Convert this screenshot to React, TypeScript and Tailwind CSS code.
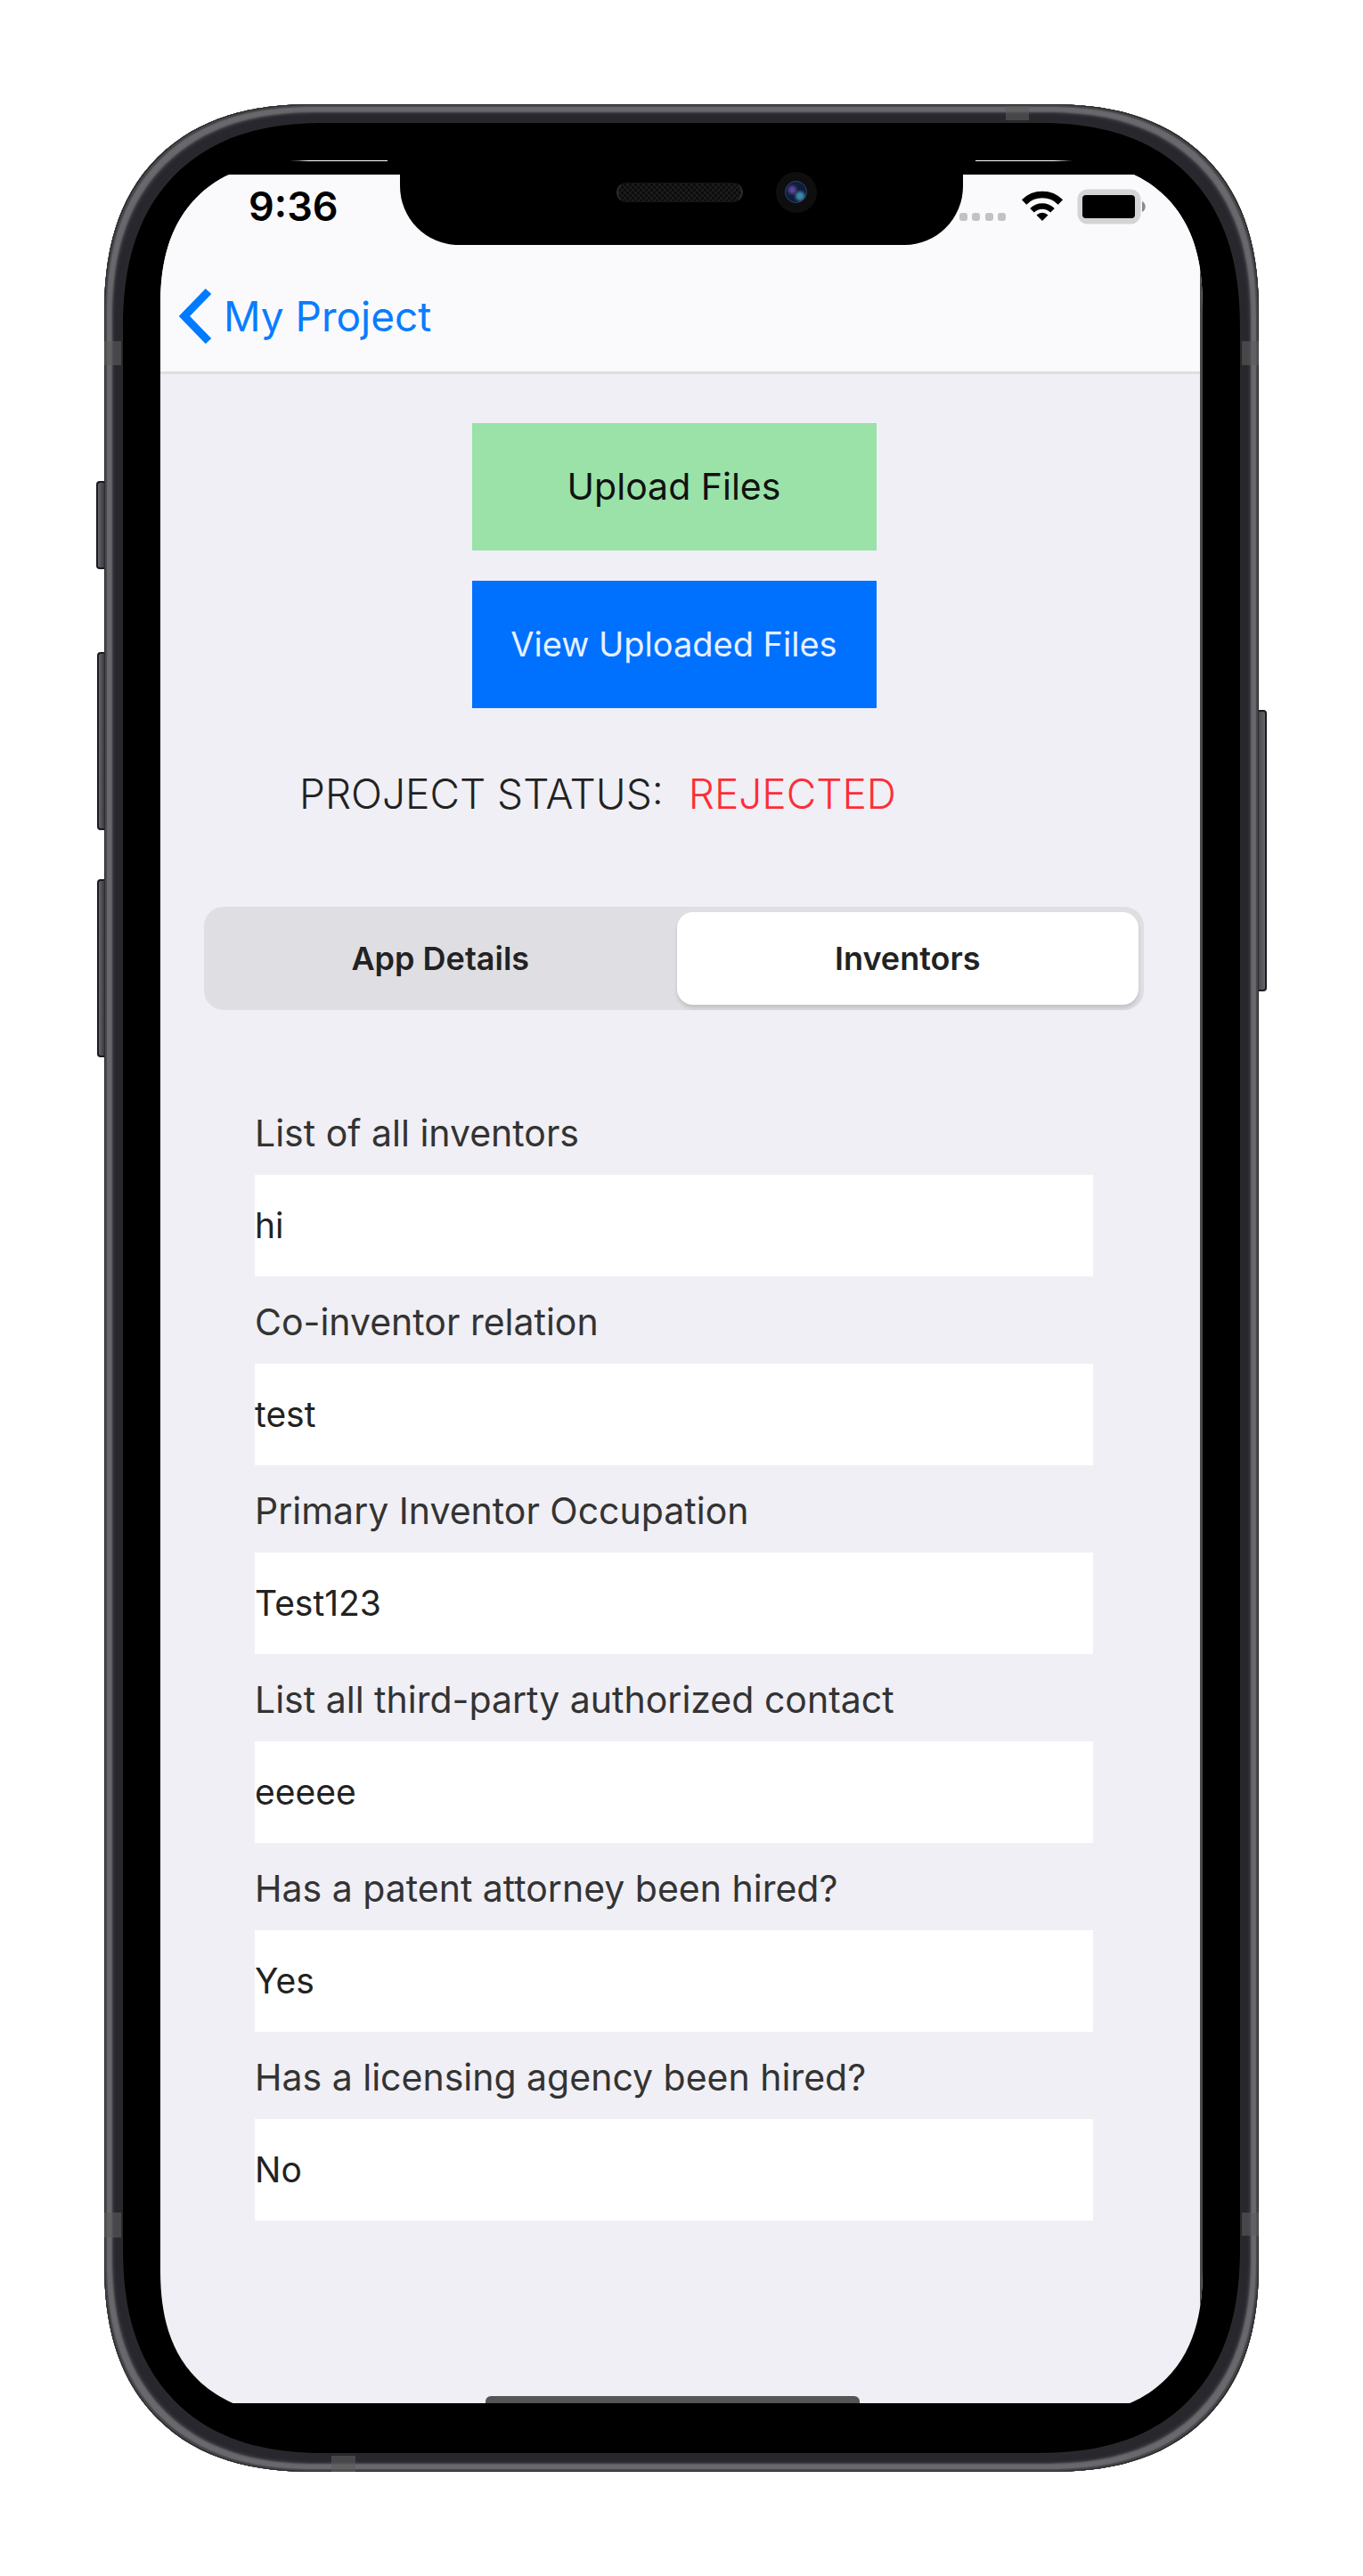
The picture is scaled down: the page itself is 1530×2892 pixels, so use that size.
import { useState } from "react";

const fields = [
  { id: "inventors", label: "List of all inventors", value: "hi" },
  { id: "relation", label: "Co-inventor relation", value: "test" },
  { id: "occupation", label: "Primary Inventor Occupation", value: "Test123" },
  { id: "contact", label: "List all third-party authorized contact", value: "eeeee" },
  { id: "attorney", label: "Has a patent attorney been hired?", value: "Yes" },
  { id: "agency", label: "Has a licensing agency been hired?", value: "No" },
];

const keyLeft =
  "absolute rounded-l-[4px] border-2 border-r-0 border-[#1b1b20] bg-linear-to-r from-[#66656b] to-[#3b3a40]";

function DeviceTrim() {
  return (
    <div aria-hidden="true">
      <div className={`${keyLeft} top-[423px] -left-[9px] h-[99px] w-[9px]`} />
      <div className={`${keyLeft} top-[615px] -left-2 h-[200px] w-2`} />
      <div className={`${keyLeft} top-[870px] -left-2 h-[200px] w-2`} />
      <div className="absolute top-[680px] -right-[9px] h-[316px] w-[9px] rounded-r-[4px] border-2 border-l-0 border-[#1b1b20] bg-linear-to-r from-[#4a4a4c] to-[#66656b]" />
      <div className="absolute top-[266px] left-0 h-[27px] w-[19px] bg-[#5c5c5c]/60" />
      <div className="absolute top-[266px] right-0 h-[27px] w-[19px] bg-[#5c5c5c]/60" />
      <div className="absolute bottom-[263px] left-0 h-[28px] w-[19px] bg-[#5c5c5c]/60" />
      <div className="absolute right-0 bottom-[265px] h-[26px] w-[19px] bg-[#5c5c5c]/60" />
      <div className="absolute top-[2px] right-[258px] h-4 w-[26px] bg-[#5c5c5c]/60" />
      <div className="absolute bottom-0 left-[255px] h-[18px] w-[27px] bg-[#5c5c5c]/60" />
    </div>
  );
}

function Notch() {
  return (
    <div className="flex h-[79px] items-start justify-center rounded-b-[66px] bg-black pt-2">
      <div className="flex h-[23px] items-center gap-[37px] pl-[78px]">
        <div className="h-[22px] w-[142px] rounded-full border border-x-2 border-[#2b2b2b] border-y-[#141414] bg-[#111] bg-[repeating-conic-gradient(#1b1b1b_0_25%,#0d0d0d_0_50%)] bg-size-[6px_6px]" />
        <div className="flex size-[46px] shrink-0 items-center justify-center rounded-full bg-[#0e0e0e]">
          <div className="size-[25px] rounded-full border border-[#2f4668] bg-[radial-gradient(circle_at_70%_70%,#3c85a5_0_12%,transparent_32%),radial-gradient(circle_at_32%_40%,#5b4596_0_10%,transparent_32%)] bg-[#0f1d3c]" />
        </div>
      </div>
    </div>
  );
}

function StatusIcons() {
  return (
    <svg width="212" height="40" viewBox="0 0 212 40" aria-label="Wi-Fi on, battery full" role="img" className="shrink-0">
      <g fill="#c2c2c4">
        <rect x="0" y="27" width="9" height="9" rx="3" />
        <rect x="14" y="27" width="9" height="9" rx="3" />
        <rect x="29" y="27" width="9" height="9" rx="3" />
        <rect x="43" y="27" width="9" height="9" rx="3" />
      </g>
      <g transform="translate(70 2)">
        <path d="M23 34 16.5 27.5a9.2 9.2 0 0 1 13 0Z" fill="#000" />
        <path d="M11.5 22.3a16.3 16.3 0 0 1 23 0" fill="none" stroke="#000" strokeWidth="6.5" />
        <path d="M2.6 13a29 29 0 0 1 40.8 0" fill="none" stroke="#000" strokeWidth="7.5" />
      </g>
      <rect x="135" y="3" width="66" height="34" rx="9" fill="#d4d4d6" stroke="#d4d4d6" strokeWidth="5" />
      <rect x="138" y="7" width="59" height="26" rx="4" fill="#000" />
      <path d="M205 14c5 2 5 10 0 12Z" fill="#8c8c8e" />
    </svg>
  );
}

export default function App() {
  const [tab, setTab] = useState("Inventors");
  return (
    <div className="bg-white px-[117px] py-[117px] font-[Inter,'Liberation_Sans',sans-serif] text-black">
      <div className="relative rounded-[208px] supports-[corner-shape:squircle]:rounded-[235px] [corner-shape:superellipse(1.24)] bg-black p-[63px] shadow-[inset_0_0_0_1px_#2c2c2e,inset_0_0_1px_3px_#47474a,inset_0_0_2px_9px_#69686d,inset_0_0_3px_11px_#38373c,inset_0_0_0_20px_#28272e,inset_0_0_0_21px_#2b2b2a]">
        <DeviceTrim />
        <div className="overflow-hidden rounded-[143px] supports-[corner-shape:squircle]:rounded-[165px] [corner-shape:superellipse(1.27)] bg-black pb-[14px]">
          <div className="flex h-4 justify-between px-[145px]" aria-hidden="true">
            <div className="h-px w-[110px] bg-linear-to-r from-transparent via-white via-20% to-white" />
            <div className="h-px w-[110px] bg-linear-to-r from-white via-white via-80% to-transparent" />
          </div>
          <div className="border-r-[3px] border-[#4a4a4a] bg-[#f0eff5]">
            <header className="border-b-[3px] border-[#dedee1] bg-[#fafafc]">
              <div className="grid h-[79px] grid-cols-[1fr_632px_1fr] pl-[3px]">
                <div className="pt-2 pl-24 text-[45px] leading-[56px] font-semibold">9:36</div>
                <Notch />
                <div className="-ml-1 pt-4">
                  <StatusIcons />
                </div>
              </div>
              <nav className="flex h-[142px] items-center pt-[18px] pl-[21px]">
                <a href="#projects" className="flex items-center gap-3 text-[46px] leading-[60px] text-[#087dff]">
                  <svg width="38" height="64" viewBox="0 0 38 64" fill="none" stroke="#007aff" strokeWidth="9" aria-hidden="true">
                    <path d="M33 4 6 32l27 28" />
                  </svg>
                  My Project
                </a>
              </nav>
            </header>
            <main className="pt-[55px] pr-[120px] pl-[106px]">
              <div className="mx-auto flex w-[454px] flex-col gap-[34px]">
                <button className="h-[143px] bg-[#9ae2a8] text-[41px] text-[#111]">Upload Files</button>
                <button className="h-[143px] bg-[#0070ff] text-[38px] text-[#e6f1ff]">View Uploaded Files</button>
              </div>
              <p className="mt-16 flex gap-7 pl-[50px] text-[46px] leading-[64px] font-light text-[#222]">
                <span>PROJECT STATUS:</span>
                <span className="text-[#ff2d37]">REJECTED</span>
              </p>
              <div className="-mx-[57px] mt-[95px] grid grid-cols-2 gap-[6px] rounded-[22px] bg-[#dfdee3] p-[6px] text-[36px] font-semibold text-[#222]">
                {["App Details", "Inventors"].map((name) => (
                  <button
                    key={name}
                    aria-pressed={tab === name}
                    onClick={() => setTab(name)}
                    className={
                      tab === name
                        ? "h-[104px] rounded-[18px] bg-white shadow-[0_4px_4px_rgba(0,0,0,0.12)]"
                        : "h-[104px] rounded-[18px]"
                    }
                  >
                    {name}
                  </button>
                ))}
              </div>
              <form className="mt-[87px] flex flex-col">
                {fields.map((f) => (
                  <div key={f.id} className="flex flex-col">
                    <label htmlFor={f.id} className="h-[98px] pt-[23px] text-[41px] leading-[56px] text-[#333]">
                      {f.label}
                    </label>
                    <input
                      id={f.id}
                      defaultValue={f.value}
                      className="h-[114px] w-full bg-white pb-[2px] text-[39px] text-[#222] outline-none"
                    />
                  </div>
                ))}
              </form>
            </main>
            <div className="flex justify-center pt-[197px] pr-[17px]">
              <div className="h-2 w-[420px] rounded-t-[6px] bg-[#555]" />
            </div>
          </div>
        </div>
      </div>
    </div>
  );
}
